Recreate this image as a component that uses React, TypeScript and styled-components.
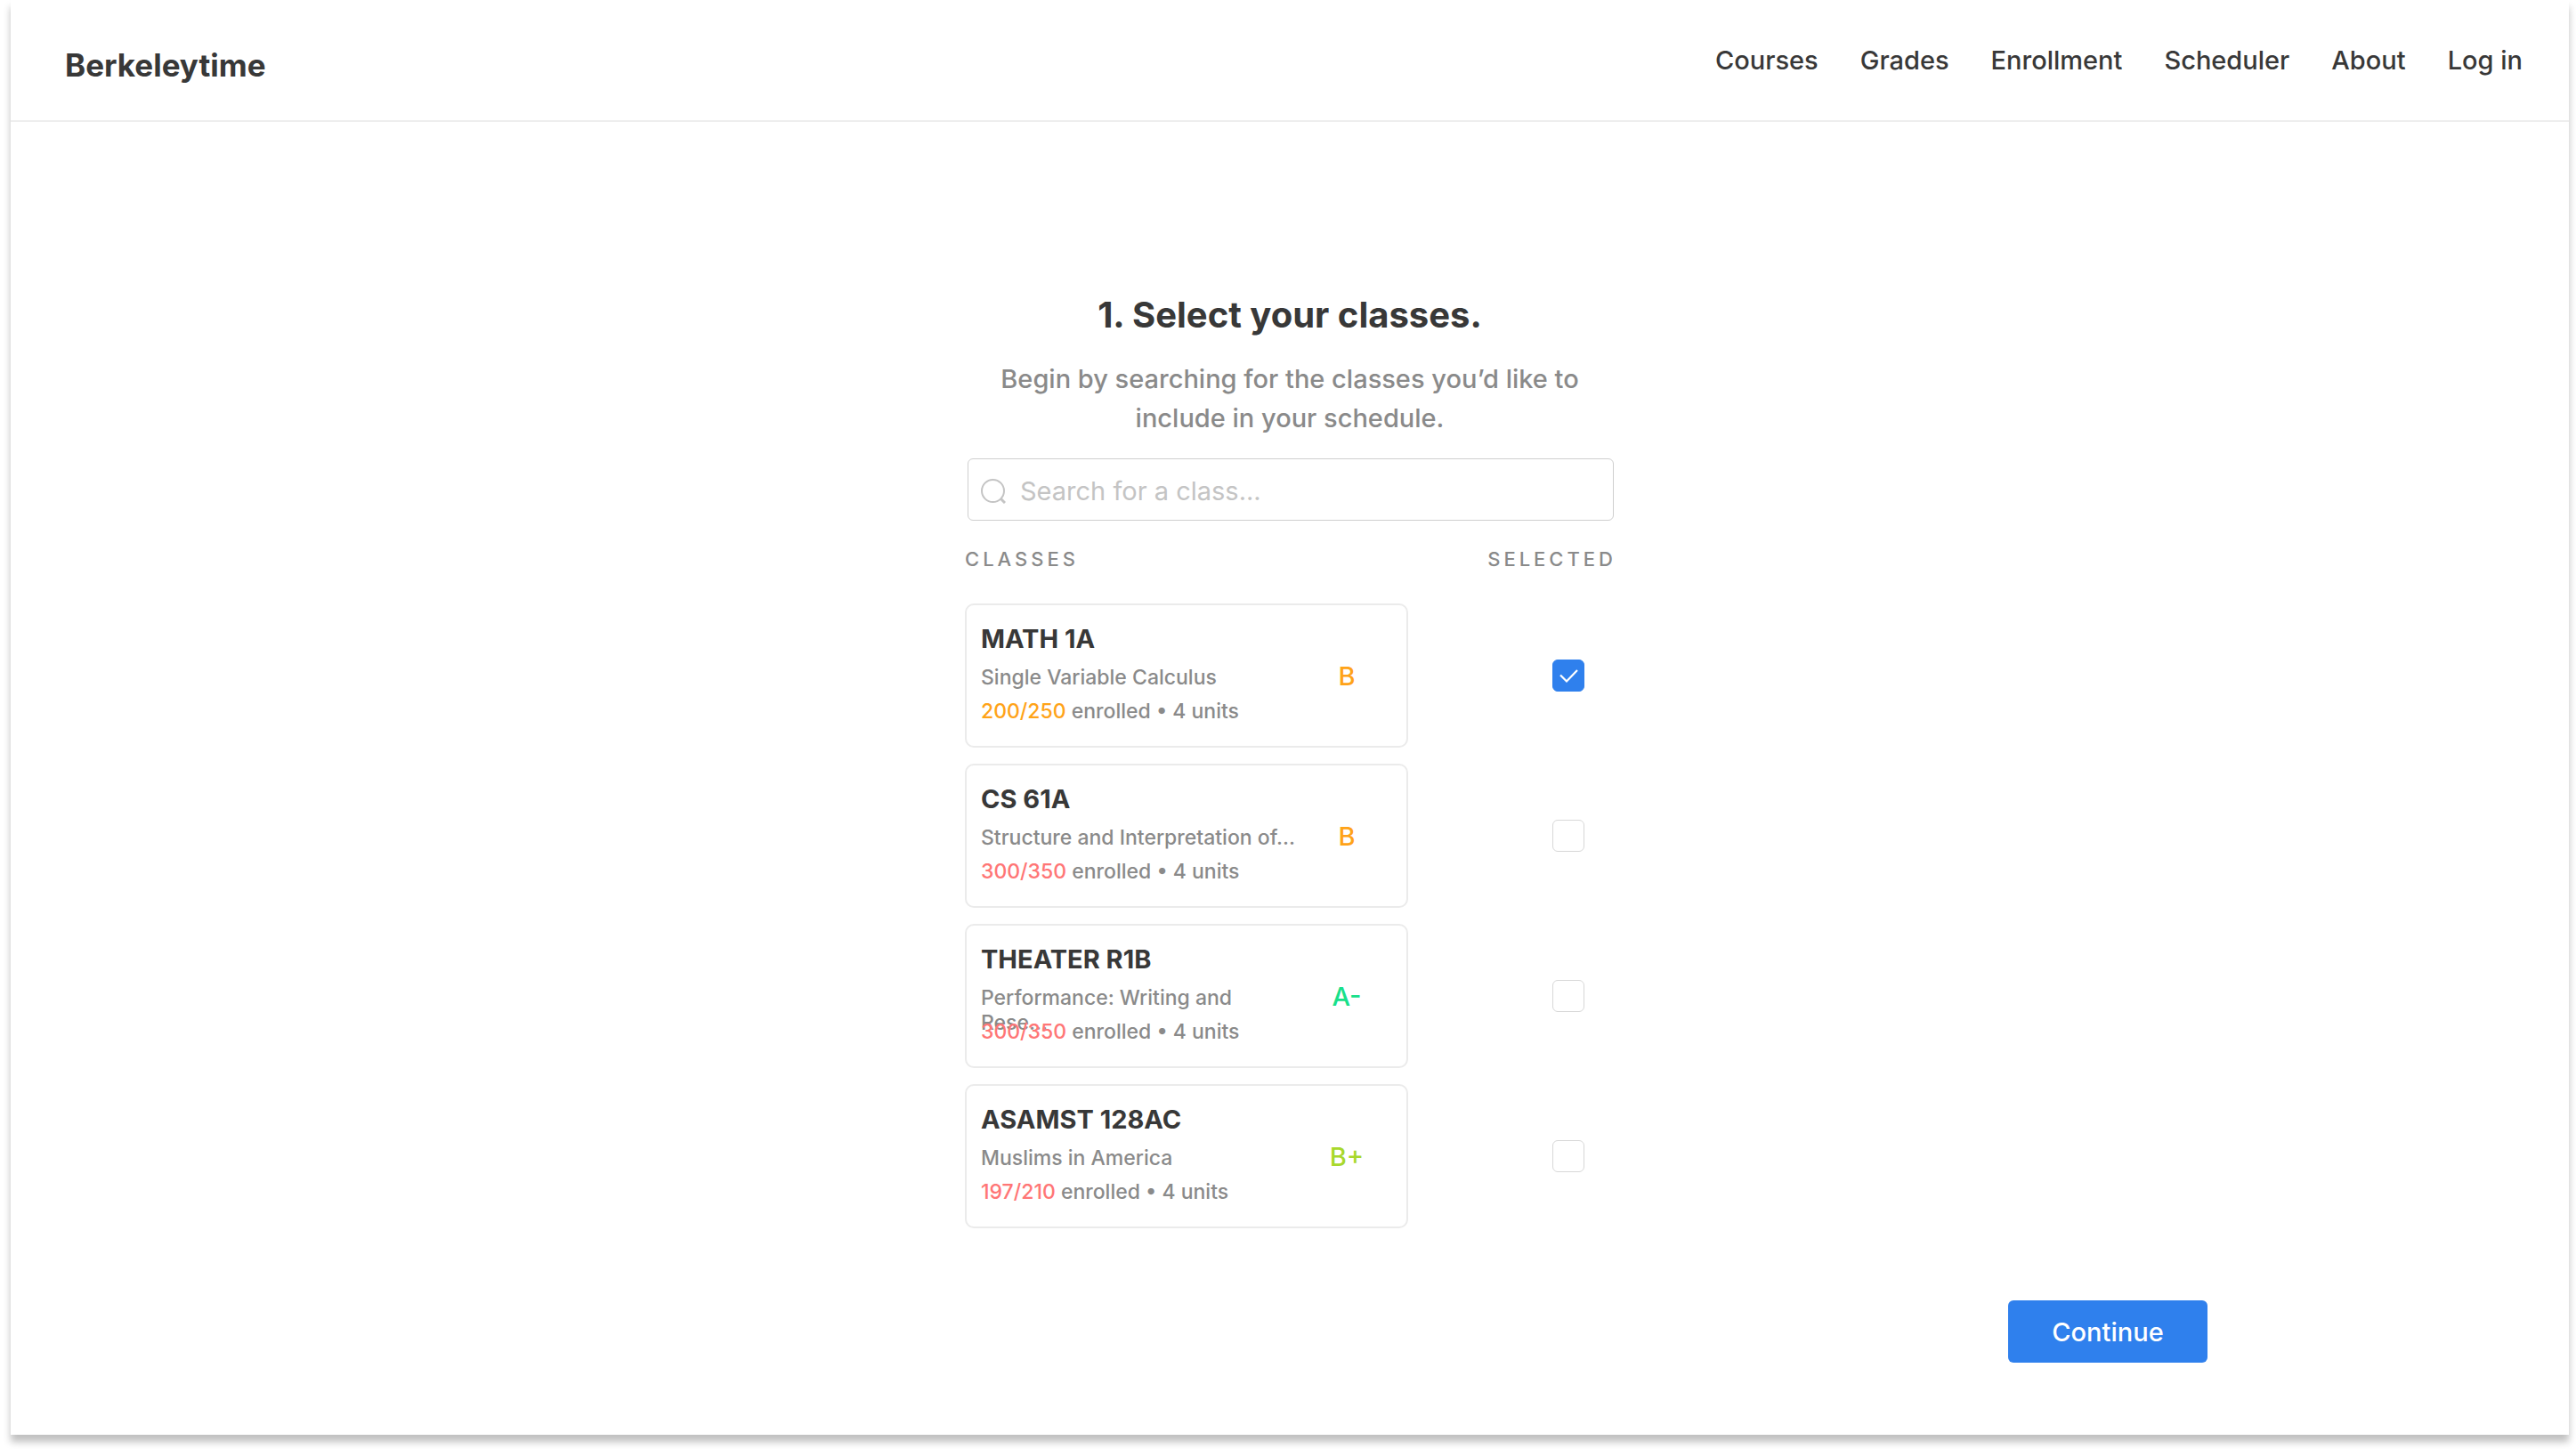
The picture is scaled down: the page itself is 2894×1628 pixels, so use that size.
import React, { useState } from "react";
import styled, { createGlobalStyle } from "styled-components";

const GlobalStyle = createGlobalStyle`
  *, *::before, *::after {
    box-sizing: border-box;
  }
  body {
    margin: 0;
    background: #ffffff;
    color: #383838;
    font-family: Inter, "Liberation Sans", sans-serif;
    font-size: 29px;
    font-weight: 500;
  }
`;

const Frame = styled.div`
  display: flex;
  flex-direction: column;
  margin: 0 8px 16px 12px;
  background: #ffffff;
  box-shadow: 0 8px 8px rgba(0, 0, 0, 0.25);
`;

const Header = styled.header`
  display: flex;
  align-items: flex-start;
  justify-content: space-between;
  padding: 50px 52px 44px 61px;
  border-bottom: 2px solid #eeeeee;
`;

const Brand = styled.a`
  padding-top: 5px;
  color: inherit;
  font-size: 35px;
  font-weight: 700;
  line-height: 36px;
  text-decoration: none;
`;

const Nav = styled.nav`
  display: flex;
  gap: 47px;
`;

const NavLink = styled.a`
  color: inherit;
  line-height: 36px;
  text-decoration: none;
`;

const Main = styled.main`
  display: flex;
  flex-direction: column;
  width: 100%;
  max-width: 730px;
  margin: 0 auto;
  padding-top: 193px;
`;

const Title = styled.h1`
  margin: 0 0 26px;
  font-size: 40px;
  font-weight: 700;
  line-height: 48px;
  text-align: center;
`;

const Intro = styled.p`
  margin: 0 32px 23px;
  color: #8a8a8a;
  line-height: 44px;
  text-align: center;
`;

const SearchBox = styled.label`
  display: flex;
  align-items: center;
  gap: 16px;
  height: 70px;
  margin: 0 1px 0 3px;
  padding: 3px 14px 0;
  border: 1px solid #cfcfcf;
  border-radius: 6px;
`;

const SearchInput = styled.input`
  flex: 1;
  min-width: 0;
  padding: 0;
  border: 0;
  outline: 0;
  background: none;
  color: inherit;
  font: inherit;
  font-weight: 400;
  line-height: 36px;
  &::placeholder {
    color: #c4c4c4;
    opacity: 1;
  }
`;

const ColumnHeads = styled.div`
  display: flex;
  justify-content: space-between;
  margin-right: -2px;
  padding: 29px 0 36px;
`;

const ColumnHead = styled.h2`
  margin: 0;
  color: #8a8a8a;
  font-size: 22px;
  font-weight: inherit;
  letter-spacing: 4px;
  line-height: 28px;
`;

const CourseList = styled.ul`
  display: flex;
  flex-direction: column;
  gap: 18px;
  margin: 0;
  padding: 0;
  list-style: none;
`;

const CourseRow = styled.li`
  display: flex;
  align-items: center;
  justify-content: space-between;
  padding-right: 34px;
`;

const Card = styled.article`
  display: flex;
  align-items: center;
  justify-content: space-between;
  width: 498px;
  height: 162px;
  padding: 0 27px 5px 16px;
  border: 2px solid #ebebeb;
  border-radius: 10px;
`;

const Details = styled.div`
  width: 358px;
`;

const Code = styled.h3`
  margin: 0 0 11px;
  font-size: 29px;
  font-weight: 700;
  line-height: 36px;
`;

const Name = styled.p`
  height: 28px;
  margin: 0 0 10px;
  color: #8a8a8a;
  font-size: 23px;
  line-height: 28px;
  white-space: pre-line;
`;

const Enrollment = styled.p`
  position: relative;
  margin: 0;
  color: #8a8a8a;
  font-size: 23px;
  line-height: 28px;
`;

const Tint = styled.span<{ $color: string }>`
  color: ${(p) => p.$color};
`;

const Grade = styled.span<{ $color: string }>`
  width: 80px;
  padding-top: 6px;
  color: ${(p) => p.$color};
  line-height: 36px;
  text-align: center;
`;

const CheckCell = styled.label`
  display: grid;
  width: 36px;
  height: 36px;
  & > * {
    grid-area: 1 / 1;
  }
`;

const Checkbox = styled.input`
  appearance: none;
  width: 36px;
  height: 36px;
  margin: 0;
  border: 1px solid #d8d8d8;
  border-radius: 6px;
  background: #ffffff;
  &:checked {
    border-color: #2f80ed;
    background: #2f80ed;
  }
`;

const Footer = styled.footer`
  display: flex;
  justify-content: flex-end;
  width: 100%;
  max-width: 2062px;
  margin: 0 auto;
  padding: 81px 0;
`;

const ContinueButton = styled.button`
  height: 70px;
  width: 224px;
  padding: 0;
  border: 0;
  border-radius: 6px;
  background: #2f80ed;
  color: #ffffff;
  font: inherit;
`;

const SearchIcon = () => (
  <svg width="28" height="28" viewBox="0 0 28 28" fill="none" stroke="#c4c4c4" strokeWidth="2" aria-hidden="true">
    <circle cx="13.5" cy="13.5" r="12.5" />
    <path d="M22 22L27 27" strokeWidth="3" />
  </svg>
);

const CheckIcon = () => (
  <svg width="36" height="36" viewBox="0 0 36 36" fill="none" stroke="#ffffff" strokeWidth="2.2" aria-hidden="true" pointerEvents="none">
    <path d="M9 17.5L16 24.5L28 12" />
  </svg>
);

const AMBER = "#ffa318";
const RED = "#ff7676";
const GREEN = "#18e08a";
const LIME = "#a8d82c";

const links = ["Courses", "Grades", "Enrollment", "Scheduler", "About", "Log in"];

const courses = [
  { code: "MATH 1A", name: "Single Variable Calculus", seats: "200/250", tint: AMBER, grade: "B", gradeColor: AMBER },
  { code: "CS 61A", name: "Structure and Interpretation of...", seats: "300/350", tint: RED, grade: "B", gradeColor: AMBER },
  { code: "THEATER R1B", name: "Performance: Writing and\nRese...", seats: "300/350", tint: RED, grade: "A-", gradeColor: GREEN },
  { code: "ASAMST 128AC", name: "Muslims in America", seats: "197/210", tint: RED, grade: "B+", gradeColor: LIME },
];

export default function App() {
  const [selected, setSelected] = useState<string[]>(["MATH 1A"]);
  const toggle = (code: string) =>
    setSelected((s) => (s.includes(code) ? s.filter((c) => c !== code) : [...s, code]));

  return (
    <>
      <GlobalStyle />
      <Frame>
        <Header>
          <Brand href="#">Berkeleytime</Brand>
          <Nav>
            {links.map((l) => (
              <NavLink key={l} href="#">{l}</NavLink>
            ))}
          </Nav>
        </Header>
        <Main>
          <Title>1. Select your classes.</Title>
          <Intro>Begin by searching for the classes you’d like to include in your schedule.</Intro>
          <SearchBox>
            <SearchIcon />
            <SearchInput type="text" placeholder="Search for a class..." aria-label="Search for a class" />
          </SearchBox>
          <ColumnHeads>
            <ColumnHead>CLASSES</ColumnHead>
            <ColumnHead>SELECTED</ColumnHead>
          </ColumnHeads>
          <CourseList>
            {courses.map((c) => (
              <CourseRow key={c.code}>
                <Card>
                  <Details>
                    <Code>{c.code}</Code>
                    <Name>{c.name}</Name>
                    <Enrollment>
                      <Tint $color={c.tint}>{c.seats}</Tint> enrolled • 4 units
                    </Enrollment>
                  </Details>
                  <Grade $color={c.gradeColor}>{c.grade}</Grade>
                </Card>
                <CheckCell>
                  <Checkbox
                    type="checkbox"
                    aria-label={c.code}
                    checked={selected.includes(c.code)}
                    onChange={() => toggle(c.code)}
                  />
                  {selected.includes(c.code) && <CheckIcon />}
                </CheckCell>
              </CourseRow>
            ))}
          </CourseList>
        </Main>
        <Footer>
          <ContinueButton type="button">Continue</ContinueButton>
        </Footer>
      </Frame>
    </>
  );
}
